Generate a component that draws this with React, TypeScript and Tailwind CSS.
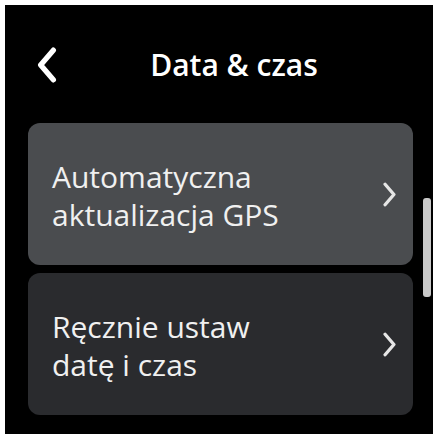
import React from "react";

function Chevron({ dir, className }: { dir: "left" | "right"; className: string }) {
  return (
    <svg viewBox="0 0 20 34" className={className} fill="none">
      <path
        d={dir === "left" ? "M16 3 L4 17 L16 31" : "M4 3 L16 17 L4 31"}
        stroke="currentColor"
        strokeWidth={dir === "left" ? 5 : 4.5}
        strokeLinecap="round"
        strokeLinejoin="round"
      />
    </svg>
  );
}

const items = [
  { lines: ["Automatyczna", "aktualizacja GPS"], bg: "bg-[#4a4c4f]" },
  { lines: ["Ręcznie ustaw", "datę i czas"], bg: "bg-[#2a2b2e]" },
];

export default function App() {
  return (
    <div className="h-[440px] w-[440px] bg-white p-[5px]" style={{ fontFamily: '"Open Sans", "Noto Sans", sans-serif' }}>
      <div className="relative flex h-[429px] w-[428px] flex-col bg-black">
        <header className="relative flex h-[118px] items-center justify-center">
          <Chevron dir="left" className="absolute left-[31px] top-[42px] h-[36px] w-[22px] text-white" />
          <h1 className="pl-[30px] text-[30px] font-semibold text-white">Data &amp; czas</h1>
        </header>

        <div className="flex flex-col gap-[8px] pl-[23px]">
          {items.map((item) => (
            <div key={item.lines[0]} className={`flex h-[142px] w-[385px] items-center justify-between rounded-[12px] pl-[24px] pr-[16px] ${item.bg}`}>
              <div className="pt-[3px] text-[30px] leading-[38px] text-[#f0f0f0]">
                {item.lines.map((l) => (
                  <div key={l}>{l}</div>
                ))}
              </div>
              <Chevron dir="right" className="h-[25px] w-[15px] text-[#e6e6e6]" />
            </div>
          ))}
        </div>

        {/* scroll indicator */}
        <div className="absolute left-[418px] top-[193px] h-[99px] w-[8px] rounded-[3px] bg-[#c9c9c9]" />
      </div>
    </div>
  );
}
